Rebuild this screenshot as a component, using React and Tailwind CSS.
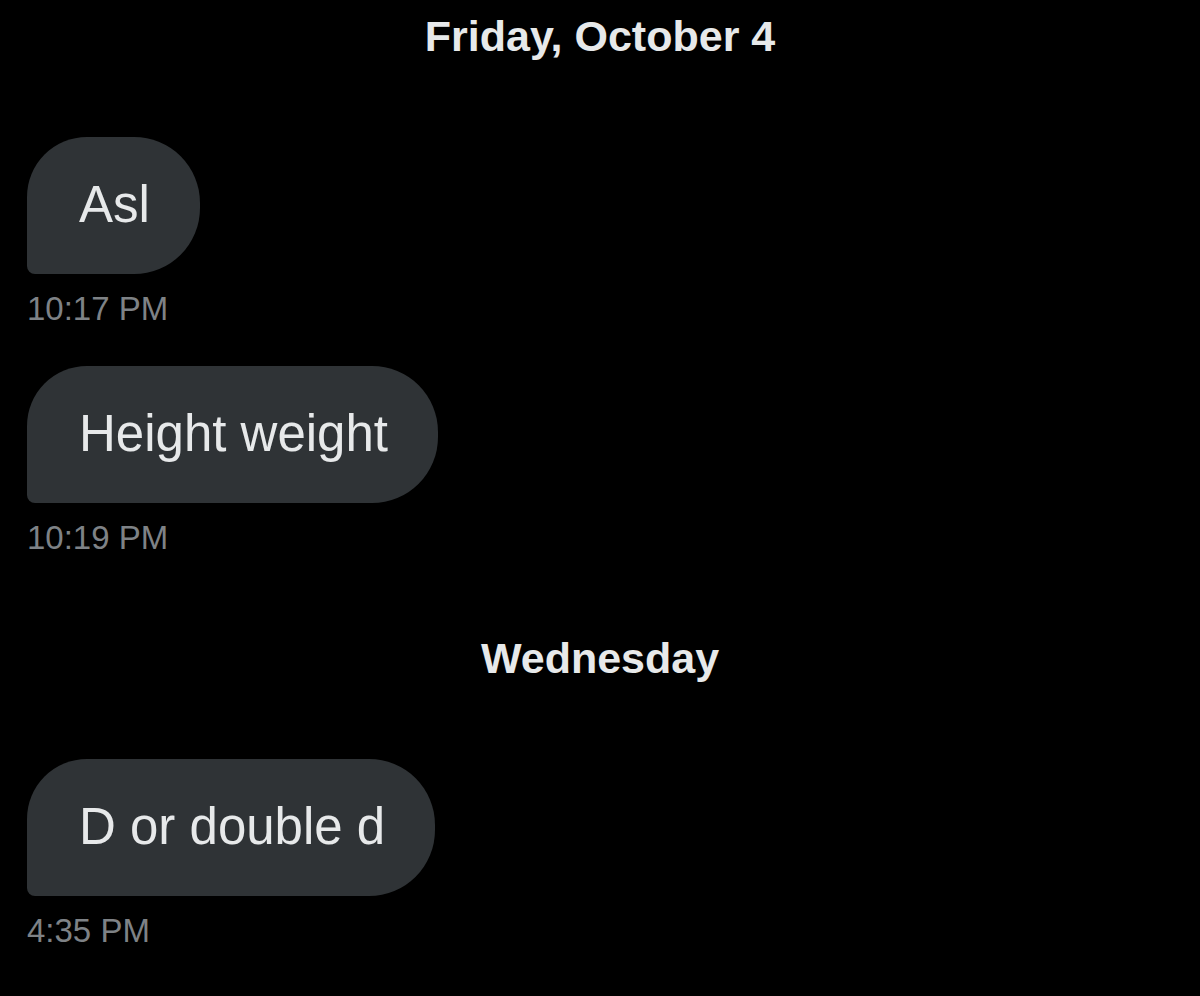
import React from 'react';

const days = [
  {
    label: 'Friday, October 4',
    messages: [
      { text: 'Asl', time: '10:17 PM' },
      { text: 'Height weight', time: '10:19 PM' },
    ],
  },
  {
    label: 'Wednesday',
    messages: [{ text: 'D or double d', time: '4:35 PM' }],
  },
];

const Bubble = ({ text, time }) => (
  <div className="flex flex-col items-start">
    <div className="bg-[#2f3336] text-[#e7e9ea] text-[51px] leading-[59px] pl-[52px] pr-[50px] pt-[38px] pb-[40px] rounded-tl-[60px] rounded-tr-[66px] rounded-br-[66px] rounded-bl-[8px]">
      {text}
    </div>
    <div className="mt-[16px] text-[33px] leading-[38px] text-[#7e8286]">{time}</div>
  </div>
);

const App = () => {
  return (
    <div className="w-[1200px] h-[996px] overflow-hidden bg-black px-[27px] font-['Liberation_Sans',Arial,sans-serif]">
      {days.map((day, i) => (
        <section key={day.label} className={i === 0 ? 'pt-[12px]' : 'pt-[77px]'}>
          <h2 className="text-center text-[43px] leading-[48px] font-bold text-[#e7e9ea]">{day.label}</h2>
          <div className="mt-[77px] flex flex-col gap-[38px]">
            {day.messages.map(m => (
              <Bubble key={m.time} text={m.text} time={m.time} />
            ))}
          </div>
        </section>
      ))}
    </div>
  );
};

export default App;
